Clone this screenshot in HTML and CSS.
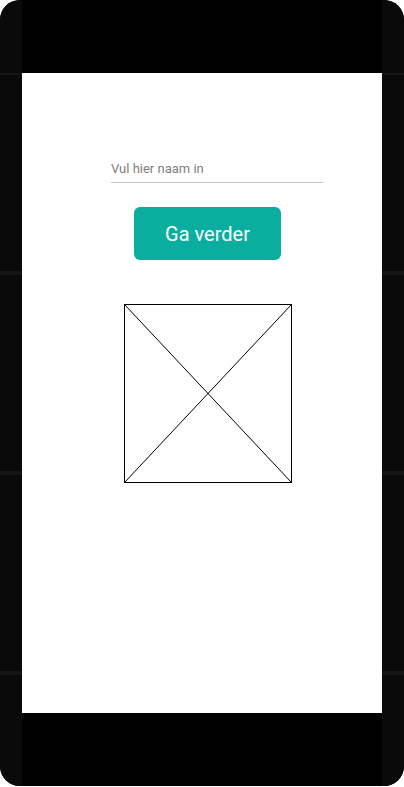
FILE: index.html
```html
<!DOCTYPE html>
<html lang="nl">
<head>
  <meta charset="utf-8">
  <meta name="viewport" content="width=device-width, initial-scale=1">
  <title>Naam invullen</title>
  <link rel="stylesheet" href="styles.css">
</head>
<body>
  <div class="device">
    <div class="side"></div>
    <main class="screen">
      <form class="form">
        <input class="name-input" type="text" name="naam" placeholder="Vul hier naam in" aria-label="Vul hier naam in">
        <button class="submit" type="button">Ga verder</button>
      </form>
      <svg class="placeholder" viewBox="0 0 168 179" aria-hidden="true">
        <rect x="0.5" y="0.5" width="167" height="178"/>
        <path d="M0.5 0.5L167.5 178.5M167.5 0.5L0.5 178.5"/>
      </svg>
    </main>
    <div class="side"></div>
  </div>
</body>
</html>
```
FILE: styles.css
```css
* {
  box-sizing: border-box;
}

body {
  margin: 0;
  background: #fff;
  font-family: Roboto, "Liberation Sans", sans-serif;
}

.device {
  display: grid;
  grid-template-columns: 22px 1fr 22px;
  min-height: calc(100vh - 1px);
  border-radius: 20px;
  overflow: hidden;
  background: #000;
}

/* Seams repeat every 200px, starting level with the screen */
.side {
  padding-top: 73px;
  background: #0a0a0a linear-gradient(#161616 2px, transparent 2px, transparent 198px, #161616 198px) 0 0 / 100% 200px;
  background-origin: content-box;
  background-clip: content-box;
  box-shadow: inset 0 73px #0a0a0a;
}

.screen {
  margin: 73px 0;
  padding: 81px 59px 40px 89px;
  background: #fff;
}

.form {
  display: flex;
  flex-direction: column;
  align-items: flex-start;
  gap: 24px;
}

.name-input {
  width: 100%;
  height: 29px;
  padding: 0;
  border: 0;
  border-bottom: 1px solid #c4c4c4;
  border-radius: 0;
  outline: 0;
  background: transparent;
  color: #333;
  font: 13px/16px Roboto, "Liberation Sans", sans-serif;
}

.name-input::placeholder {
  color: #808080;
  opacity: 1;
}

.submit {
  width: 147px;
  height: 53px;
  margin-left: 23px;
  padding: 0;
  border: 0;
  border-radius: 6px;
  background: #0aae9e;
  color: #fff;
  font: 20px/24px Roboto, "Liberation Sans", sans-serif;
}

.placeholder {
  display: block;
  width: 168px;
  height: 179px;
  margin: 44px 0 0 13px;
  fill: none;
  stroke: #000;
}
```
